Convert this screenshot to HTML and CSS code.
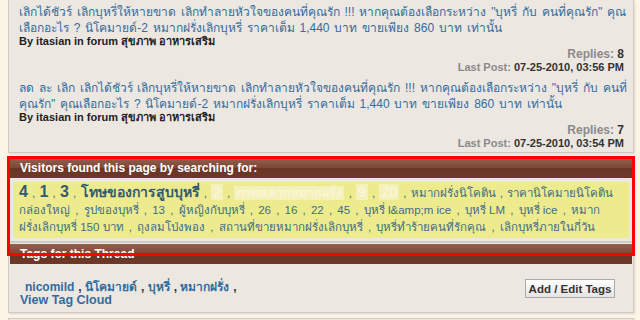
FILE: index.html
```html
<!DOCTYPE html>
<html>
<head>
    <title>Similar Threads</title>
    <meta charset="utf-8">
    <link rel="stylesheet" href="styles.css">
</head>
<body>
    <div class="page">
        <div class="block posts">
            <div class="post">
                <a class="title" href="#">เลิกได้ชัวร์ เลิกบุหรี่ให้หายขาด เลิกทำลายหัวใจของคนที่คุณรัก !!! หากคุณต้องเลือกระหว่าง "บุหรี่ กับ คนที่คุณรัก" คุณ<br>เลือกอะไร ? นิโคมายด์-2 หมากฝรั่งเลิกบุหรี่ ราคาเต็ม 1,440 บาท ขายเพียง 860 บาท เท่านั้น</a>
                <div class="by">By itasian in forum สุขภาพ อาหารเสริม</div>
                <div class="stats">
                    <div class="replies">Replies: <b>8</b></div>
                    <div class="last">Last Post: <b>07-25-2010, 03:56 PM</b></div>
                </div>
            </div>
            <div class="post">
                <a class="title" href="#">ลด ละ เลิก เลิกได้ชัวร์ เลิกบุหรี่ให้หายขาด เลิกทำลายหัวใจของคนที่คุณรัก !!! หากคุณต้องเลือกระหว่าง "บุหรี่ กับ คนที่<br>คุณรัก" คุณเลือกอะไร ? นิโคมายด์-2 หมากฝรั่งเลิกบุหรี่ ราคาเต็ม 1,440 บาท ขายเพียง 860 บาท เท่านั้น</a>
                <div class="by">By itasian in forum สุขภาพ อาหารเสริม</div>
                <div class="stats">
                    <div class="replies">Replies: <b>7</b></div>
                    <div class="last">Last Post: <b>07-25-2010, 03:54 PM</b></div>
                </div>
            </div>
        </div>

        <div class="block visitors">
            <div class="thead">Visitors found this page by searching for:</div>
            <div class="vbody">
                <div class="cloud">
                    <div class="row row-top">
                        <a class="big" href="#">4</a> , <a class="big" href="#">1</a> , <a class="big" href="#">3</a> , <a class="mid" href="#">โทษของการสูบบุหรี่</a> , <a class="hl num" href="#">2</a> , <a class="hl" href="#">ภาพฉลากหมากฝรั่ง</a> , <a class="hl num" href="#">9</a> , <a class="hl num" href="#">20</a> , <a href="#">หมากฝรั่งนิโคติน</a> , <a href="#">ราคานิโคมายนิโคติน</a>
                    </div>
                    <div class="row">
                        <a href="#">กล่องใหญ่</a> , <a href="#">รูปของบุหรี่</a> , <a href="#">13</a> , <a href="#">ผู้หญิงกับบุหรี่</a> , <a href="#">26</a> , <a href="#">16</a> , <a href="#">22</a> , <a href="#">45</a> , <a href="#">บุหรี่ l&amp;amp;m ice</a> , <a href="#">บุหรี่ LM</a> , <a href="#">บุหรี่ ice</a> , <a href="#">หมาก</a>
                    </div>
                    <div class="row">
                        <a href="#">ฝรั่งเลิกบุหรี่ 150 บาท</a> , <a href="#">ถุงลมโป่งพอง</a> , <a href="#">สถานที่ขายหมากฝรั่งเลิกบุหรี่</a> , <a href="#">บุหรี่ทำร้ายคนที่รักคุณ</a> , <a href="#">เลิกบุหรี่ภายในกี่วัน</a>
                    </div>
                </div>
            </div>
        </div>

        <div class="block tags">
            <div class="thead">Tags for this Thread</div>
            <div class="tbody">
                <div class="taglist">
                    <div class="tagline">
                        <a href="#">nicomild</a>, <a href="#">นิโคมายด์</a>, <a href="#">บุหรี่</a>, <a href="#">หมากฝรั่ง</a>,
                    </div>
                    <a class="cloudlink" href="#">View Tag Cloud</a>
                </div>
                <button class="btn">Add / Edit Tags</button>
            </div>
        </div>

        <div class="block next">
            <div class="thead"></div>
        </div>

        <div class="redmark"></div>
    </div>
</body>
</html>
```

FILE: styles.css
```css
* {
    margin: 0;
    padding: 0;
    box-sizing: border-box;
}

body {
    background: #fcf5e6;
    font-family: "Liberation Sans", Arial, sans-serif;
    font-size: 12px;
    color: #333333;
    overflow: hidden;
}

a {
    color: #336c9e;
    text-decoration: none;
}

.page {
    position: relative;
    padding: 0 6px 0 8px;
    width: 640px;
}

.block {
    background: #ede7e1;
    border: 1px solid #cfcac5;
    box-shadow: 1px 1px 2px rgba(0, 0, 0, 0.12);
}

.thead {
    height: 20px;
    padding: 0 10px;
    color: #ffffff;
    font-weight: bold;
    font-size: 12px;
    line-height: 20px;
    background: linear-gradient(#93604f, #7d4736 50%, #6a3525 51%, #6c3828);
}

/* posts */
.posts {
    border-top: none;
    padding: 4px 9px 2px 10px;
}

.post {
    margin-bottom: 6px;
}

.post:last-child {
    margin-bottom: 0;
}

.title {
    display: block;
    font-size: 12px;
    line-height: 16px;
    word-spacing: 1.5px;
    white-space: nowrap;
}

.by {
    font-size: 11px;
    font-weight: bold;
    line-height: 11px;
    color: #222222;
}

.stats {
    text-align: right;
    font-weight: bold;
    color: #8a8a8a;
}

.stats b {
    color: #333333;
}

.replies {
    font-size: 12px;
    line-height: 14px;
}

.last {
    font-size: 11px;
    line-height: 13px;
}

/* visitors */
.visitors {
    margin-top: 3px;
    padding: 1px 1px 0;
}

.vbody {
    padding: 4px 3px 3px;
}

.cloud {
    background: #eeea8e;
    padding: 1px 6px 2px;
    color: #3d6d88;
    white-space: nowrap;
    font-size: 11.5px;
    word-spacing: 2px;
}

.row {
    height: 17px;
    line-height: 17px;
}

.row-top {
    height: 19px;
    word-spacing: 1px;
}

.cloud a {
    color: #3d6d88;
    word-spacing: 0;
}

.cloud .big {
    font-size: 16px;
    font-weight: bold;
    color: #2e5d72;
}

.cloud .mid {
    font-size: 14px;
    font-weight: bold;
    color: #2e5d72;
}

.cloud .hl {
    background: #f5f1bd;
    color: #fbf8dc;
    padding: 0 2px;
    font-size: 12.5px;
}

.cloud .hl.num {
    font-size: 14px;
}

/* tags */
.tags {
    padding: 1px 1px 0;
}

.tbody {
    display: flex;
    justify-content: space-between;
    align-items: flex-start;
    padding: 17px 17px 5px 10px;
}

.tagline {
    padding-left: 5px;
    font-weight: bold;
    line-height: 13px;
}

.tagline a {
    margin-right: 4px;
}

.cloudlink {
    display: block;
    font-weight: bold;
    font-size: 12.5px;
    line-height: 13px;
}

.btn {
    width: 90px;
    height: 19px;
    margin-top: -2px;
    font-family: inherit;
    font-size: 11.5px;
    font-weight: bold;
    color: #333333;
    background: linear-gradient(#ffffff, #e4e4e4);
    border: 1px solid #aaaaaa;
}

.next {
    margin-top: 5px;
    padding: 1px 1px 0;
}

/* screenshot annotation */
.redmark {
    position: absolute;
    left: 7px;
    top: 156px;
    width: 628px;
    height: 100px;
    border: 3px solid #ff0000;
}
```
